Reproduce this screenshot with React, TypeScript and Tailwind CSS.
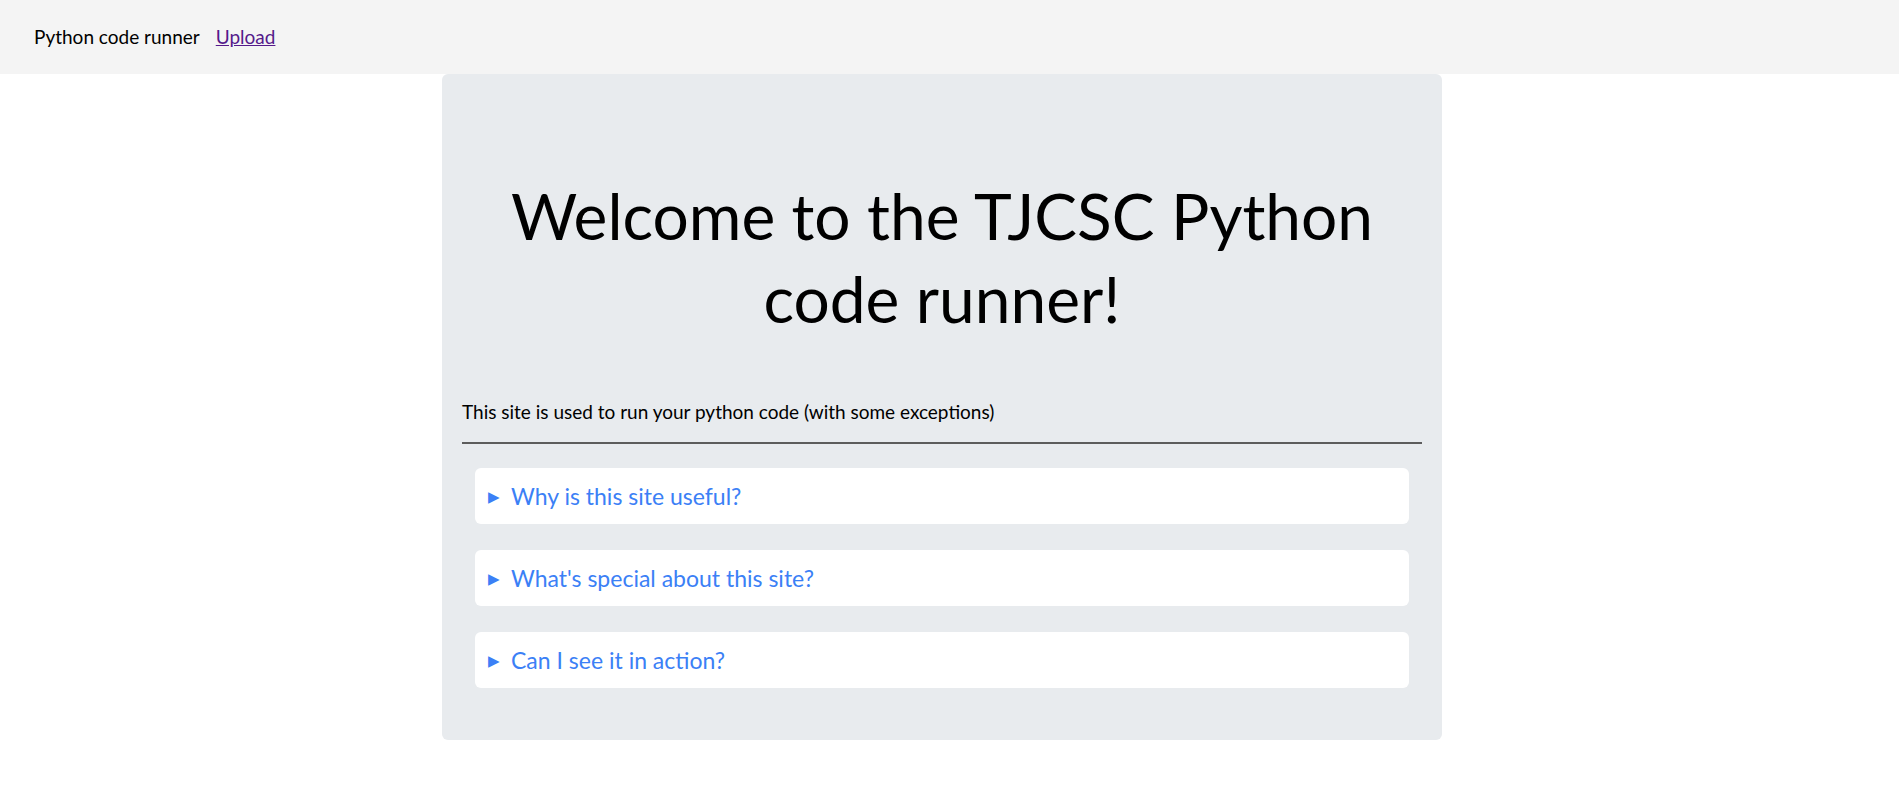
import React from "react";

const faqs = [
  "Why is this site useful?",
  "What's special about this site?",
  "Can I see it in action?",
];

function Nav() {
  return (
    <nav className="flex h-[74px] items-center gap-[16px] bg-[#f4f4f4] px-[34px] text-[19px] text-black">
      <span>Python code runner</span>
      <a href="#" className="text-[#551a8b] underline">
        Upload
      </a>
    </nav>
  );
}

function Faq({ title }: { title: string }) {
  return (
    <details className="rounded-md bg-white">
      <summary className="flex h-[56px] cursor-pointer items-center gap-[11px] px-[13px] text-[23px] text-[#3b80f6]">
        <span className="text-[15px] leading-none">▶</span>
        <span>{title}</span>
      </summary>
    </details>
  );
}

export default function App() {
  return (
    <div className="min-h-screen bg-white font-['Lato',_'Noto_Sans',_sans-serif]">
      <Nav />

      <main className="flex justify-center pr-[15px]">
        <section className="w-[1000px] rounded-md bg-[#e8ebee] px-[20px] pb-[52px]">
          {/* Heading */}
          <h1 className="pt-[100px] pb-[58px] text-center text-[64px] leading-[83px] text-black">
            Welcome to the TJCSC Python
            <br />
            code runner!
          </h1>

          <p className="text-[19px] leading-[28px] text-black">
            This site is used to run your python code (with some exceptions)
          </p>
          <hr className="mt-[16px] border-t-2 border-[#5c5c5c]" />

          {/* Questions */}
          <div className="flex flex-col gap-[26px] px-[13px] pt-[24px]">
            {faqs.map((q) => (
              <Faq key={q} title={q} />
            ))}
          </div>
        </section>
      </main>
    </div>
  );
}
